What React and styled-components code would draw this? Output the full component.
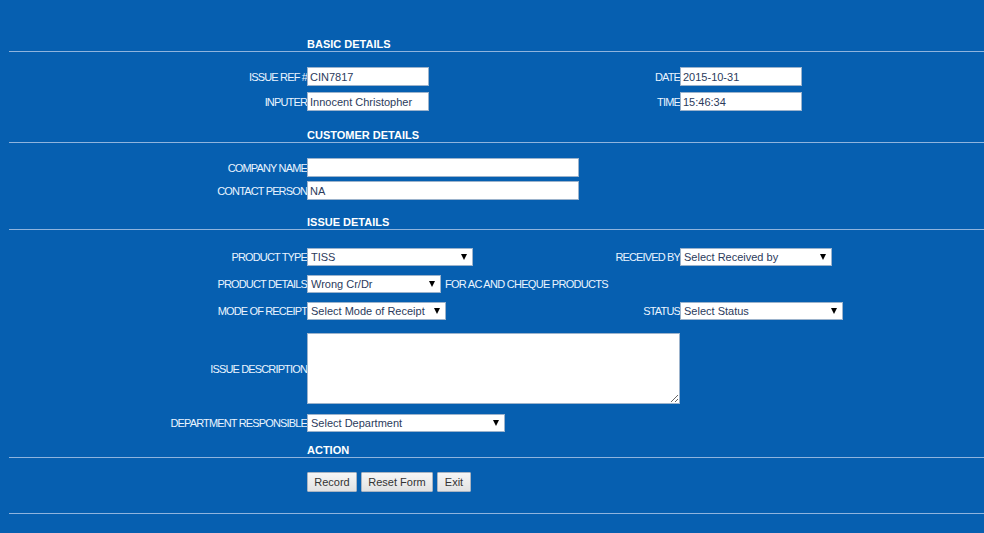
import React from "react";
import styled, { createGlobalStyle } from "styled-components";

const Global = createGlobalStyle`
  html, body { margin: 0; padding: 0; background: #065fb0; }
  body { font-family: "Liberation Sans", Arial, sans-serif; font-size: 11px; color: #fff; }
  #root { min-height: 533px; }
`;

const Page = styled.form`
  margin: 0 0 0 9px;
  padding-top: 37px;
  display: flex;
  flex-direction: column;
`;

const Section = styled.section`
  display: flex;
  flex-direction: column;
  margin-top: ${(p) => p.$top || 0}px;
`;

const Title = styled.h3`
  margin: 0 0 0 298px;
  height: 14px;
  line-height: 15px;
  font-size: 11px;
  font-weight: bold;
  color: #fff;
`;

const Rule = styled.div`
  height: 1px;
  background: #8fb4de;
  margin-top: ${(p) => p.$top || 0}px;
`;

const Row = styled.div`
  display: grid;
  grid-template-columns: 298px 200px 173px 1fr;
  align-items: center;
  min-height: ${(p) => p.$h || 19}px;
  margin-top: ${(p) => p.$top || 0}px;
`;

const Label = styled.label`
  text-align: right;
  white-space: nowrap;
  color: #eaf4ff;
  letter-spacing: -0.85px;
  font-size: 11px;
`;

const Field = styled.div`
  display: flex;
  align-items: center;
  grid-column: ${(p) => p.$span || "auto"};
  gap: 4px;
`;

const TextInput = styled.input`
  box-sizing: border-box;
  width: ${(p) => p.$w}px;
  height: 19px;
  margin: 0;
  padding: 0 2px;
  border: 1px solid #9cb3cc;
  background: #fff;
  color: #2b3b5c;
  font-family: "Liberation Sans", Arial, sans-serif;
  font-size: 11px;
  outline: none;
`;

const SelectWrap = styled.div`
  position: relative;
  width: ${(p) => p.$w}px;
  height: 18px;
`;

const Select = styled.select`
  appearance: none;
  -webkit-appearance: none;
  box-sizing: border-box;
  width: 100%;
  height: 100%;
  margin: 0;
  padding: 0 14px 0 3px;
  border: 1px solid #9cb3cc;
  border-radius: 0;
  background: #fff;
  color: #2b3b5c;
  font-family: "Liberation Sans", Arial, sans-serif;
  font-size: 11px;
  outline: none;
`;

const Arrow = styled.span`
  position: absolute;
  right: 6px;
  top: 6px;
  width: 0;
  height: 0;
  border-left: 3px solid transparent;
  border-right: 3px solid transparent;
  border-top: 6px solid #000;
  pointer-events: none;
`;

const Note = styled.span`
  color: #eaf4ff;
  letter-spacing: -0.72px;
  white-space: nowrap;
`;

const TextArea = styled.textarea`
  box-sizing: border-box;
  width: 373px;
  height: 71px;
  margin: 0;
  padding: 2px;
  border: 1px solid #9cb3cc;
  background: #fff;
  color: #2b3b5c;
  font-family: "Liberation Sans", Arial, sans-serif;
  font-size: 11px;
  outline: none;
`;

const Buttons = styled.div`
  grid-column: 2 / -1;
  display: flex;
  gap: 4px;
`;

const Button = styled.button`
  box-sizing: border-box;
  width: ${(p) => p.$w}px;
  height: 20px;
  margin: 0;
  padding: 0;
  border: 1px solid #a9b4c2;
  border-radius: 1px;
  background: linear-gradient(#f6f6f6, #e2e2e2);
  color: #333;
  font-family: "Liberation Sans", Arial, sans-serif;
  font-size: 11px;
`;

function Dropdown({ w, value }) {
  return (
    <SelectWrap $w={w}>
      <Select defaultValue={value}>
        <option>{value}</option>
      </Select>
      <Arrow />
    </SelectWrap>
  );
}

export default function App() {
  return (
    <>
      <Global />
      <Page onSubmit={(e) => e.preventDefault()}>
        <Section>
          <Title>BASIC DETAILS</Title>
          <Rule />
          <Row $top={15}>
            <Label>ISSUE REF #</Label>
            <Field><TextInput $w={122} defaultValue="CIN7817" /></Field>
            <Label>DATE</Label>
            <Field><TextInput $w={122} defaultValue="2015-10-31" /></Field>
          </Row>
          <Row $top={6}>
            <Label>INPUTER</Label>
            <Field><TextInput $w={122} defaultValue="Innocent Christopher" /></Field>
            <Label>TIME</Label>
            <Field><TextInput $w={122} defaultValue="15:46:34" /></Field>
          </Row>
        </Section>

        <Section $top={17}>
          <Title>CUSTOMER DETAILS</Title>
          <Rule />
          <Row $top={15}>
            <Label>COMPANY NAME</Label>
            <Field $span="2 / -1"><TextInput $w={272} defaultValue="" /></Field>
          </Row>
          <Row $top={4}>
            <Label>CONTACT PERSON</Label>
            <Field $span="2 / -1"><TextInput $w={272} defaultValue="NA" /></Field>
          </Row>
        </Section>

        <Section $top={15}>
          <Title>ISSUE DETAILS</Title>
          <Rule />
          <Row $top={18} $h={18}>
            <Label>PRODUCT TYPE</Label>
            <Field><Dropdown w={166} value="TISS" /></Field>
            <Label>RECEIVED BY</Label>
            <Field><Dropdown w={152} value="Select Received by" /></Field>
          </Row>
          <Row $top={9} $h={18}>
            <Label>PRODUCT DETAILS</Label>
            <Field $span="2 / 4">
              <Dropdown w={134} value="Wrong Cr/Dr" />
              <Note>FOR AC AND CHEQUE PRODUCTS</Note>
            </Field>
          </Row>
          <Row $top={9} $h={18}>
            <Label>MODE OF RECEIPT</Label>
            <Field><Dropdown w={139} value="Select Mode of Receipt" /></Field>
            <Label>STATUS</Label>
            <Field><Dropdown w={163} value="Select Status" /></Field>
          </Row>
          <Row $top={13} $h={71}>
            <Label>ISSUE DESCRIPTION</Label>
            <Field $span="2 / 4"><TextArea /></Field>
          </Row>
          <Row $top={10} $h={18}>
            <Label>DEPARTMENT RESPONSIBLE</Label>
            <Field $span="2 / 4"><Dropdown w={198} value="Select Department" /></Field>
          </Row>
        </Section>

        <Section $top={11}>
          <Title>ACTION</Title>
          <Rule />
          <Row $top={14} $h={20}>
            <Buttons>
              <Button type="submit" $w={50}>Record</Button>
              <Button type="reset" $w={72}>Reset Form</Button>
              <Button type="button" $w={34}>Exit</Button>
            </Buttons>
          </Row>
          <Rule $top={21} />
        </Section>
      </Page>
    </>
  );
}
